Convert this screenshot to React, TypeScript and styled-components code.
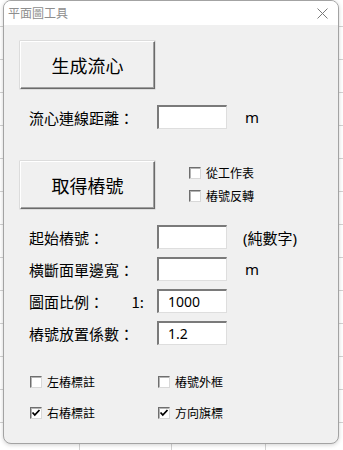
import React from 'react';
import styled, { createGlobalStyle } from 'styled-components';

const Global = createGlobalStyle`
  html, body { margin: 0; padding: 0; }
  body {
    width: 343px;
    height: 450px;
    overflow: hidden;
    background-color: #ffffff;
    background-image:
      repeating-linear-gradient(to bottom, transparent 0 32px, #d2d2d2 32px 33px),
      linear-gradient(to right, transparent 79px, #d2d2d2 79px 80px, transparent 80px 171px, #d2d2d2 171px 172px, transparent 172px 265px, #d2d2d2 265px 266px, transparent 266px);
    background-position: 0 -6px, 0 0;
  }
`;

const Window = styled.div`
  margin-left: 3px;
  width: 336px;
  height: 444px;
  box-sizing: border-box;
  border: 1px solid #a3a3a3;
  border-radius: 8px;
  overflow: hidden;
  background: #f0f0f0;
  display: flex;
  flex-direction: column;
  box-shadow: 0 1px 4px rgba(0, 0, 0, 0.18);
  font-family: "Noto Sans CJK TC", "Noto Sans", sans-serif;
  color: #000;
`;

const TitleBar = styled.div`
  height: 24px;
  flex: none;
  background: #ffffff;
  display: flex;
  align-items: center;
  justify-content: space-between;
  padding: 0 10px 0 4px;
`;

const Title = styled.span`
  font-size: 12px;
  color: #8e8e8e;
  line-height: 24px;
`;

const Body = styled.div`
  display: flex;
  flex-direction: column;
  padding: 16px 0 0 16px;
`;

const Group = styled.div<{ $top?: number }>`
  display: flex;
  flex-direction: column;
  gap: 16px;
  margin-top: ${(p) => p.$top ?? 0}px;
`;

const Button = styled.button`
  width: 135px;
  height: 48px;
  box-sizing: border-box;
  background: #f0f0f0;
  border-style: solid;
  border-width: 1px;
  border-color: #ffffff #6a6a6a #6a6a6a #ffffff;
  box-shadow: inset -1px -1px 0 #a0a0a0, 0 0 0 0.5px #c8c8c8;
  font-family: "Noto Sans CJK TC", "Noto Sans", sans-serif;
  font-size: 18px;
  color: #000;
  padding: 0;
  flex: none;
`;

const ButtonRow = styled.div`
  display: flex;
  align-items: flex-start;
  gap: 34px;
`;

const SideChecks = styled.div`
  display: flex;
  flex-direction: column;
  gap: 11px;
  margin-top: 6px;
`;

const Fields = styled.div`
  display: flex;
  flex-direction: column;
  gap: 8px;
`;

const Row = styled.div`
  display: grid;
  grid-template-columns: 128px 70px auto;
  align-items: center;
  height: 24px;
  padding-left: 9px;
`;

const Label = styled.div`
  display: flex;
  justify-content: space-between;
  padding-right: 13px;
  font-size: 15px;
  white-space: nowrap;
`;

const Input = styled.div`
  width: 70px;
  height: 24px;
  box-sizing: border-box;
  background: #ffffff;
  border-style: solid;
  border-width: 2px 1px 1px 2px;
  border-color: #7a7a7a #dedede #dedede #7a7a7a;
  padding-left: 9px;
  display: flex;
  align-items: center;
  font-family: "Noto Sans", "Liberation Sans", sans-serif;
  font-size: 14px;
`;

const Unit = styled.div<{ $gap: number }>`
  padding-left: ${(p) => p.$gap}px;
  font-size: 15px;
  white-space: nowrap;
  font-family: "Noto Sans", "Noto Sans CJK TC", sans-serif;
`;

const CheckGrid = styled.div`
  margin-top: 31px;
  padding-left: 10px;
  display: grid;
  grid-template-columns: 128px auto;
  row-gap: 19px;
`;

const CheckLabel = styled.div`
  display: flex;
  align-items: center;
  gap: 5px;
  height: 12px;
  font-size: 12px;
  line-height: 12px;
  white-space: nowrap;
`;

const Box = styled.span`
  width: 12px;
  height: 12px;
  box-sizing: border-box;
  flex: none;
  background: #ffffff;
  border-style: solid;
  border-width: 1px;
  border-color: #6e6e6e #d8d8d8 #d8d8d8 #6e6e6e;
  box-shadow: inset 1px 1px 0 #b4b4b4;
  display: flex;
  align-items: center;
  justify-content: center;
`;

const Check = ({ label, checked }: { label: string; checked?: boolean }) => (
  <CheckLabel>
    <Box>
      {checked && (
        <svg width="10" height="10" viewBox="0 0 10 10">
          <path d="M1.5 4.5 L3.8 7 L8.5 2" fill="none" stroke="#000" strokeWidth="1.8" />
        </svg>
      )}
    </Box>
    <span>{label}</span>
  </CheckLabel>
);

const CloseIcon = () => (
  <svg width="11" height="11" viewBox="0 0 11 11">
    <path d="M0.5 0.5 L10.5 10.5 M10.5 0.5 L0.5 10.5" stroke="#7a7a7a" strokeWidth="1" fill="none" />
  </svg>
);

export default function App() {
  return (
    <>
      <Global />
      <Window>
        <TitleBar>
          <Title>平面圖工具</Title>
          <CloseIcon />
        </TitleBar>
        <Body>
          <Group>
            <Button>生成流心</Button>
            <Row>
              <Label>流心連線距離：</Label>
              <Input />
              <Unit $gap={18}>m</Unit>
            </Row>
          </Group>
          <Group $top={32}>
            <ButtonRow>
              <Button>取得樁號</Button>
              <SideChecks>
                <Check label="從工作表" />
                <Check label="樁號反轉" />
              </SideChecks>
            </ButtonRow>
            <Fields>
              <Row>
                <Label>起始樁號：</Label>
                <Input />
                <Unit $gap={16}>(純數字)</Unit>
              </Row>
              <Row>
                <Label>橫斷面單邊寬：</Label>
                <Input />
                <Unit $gap={18}>m</Unit>
              </Row>
              <Row>
                <Label>
                  <span>圖面比例：</span>
                  <span>1:</span>
                </Label>
                <Input>1000</Input>
              </Row>
              <Row>
                <Label>樁號放置係數：</Label>
                <Input>1.2</Input>
              </Row>
            </Fields>
          </Group>
          <CheckGrid>
            <Check label="左樁標註" />
            <Check label="樁號外框" />
            <Check label="右樁標註" checked />
            <Check label="方向旗標" checked />
          </CheckGrid>
        </Body>
      </Window>
    </>
  );
}
